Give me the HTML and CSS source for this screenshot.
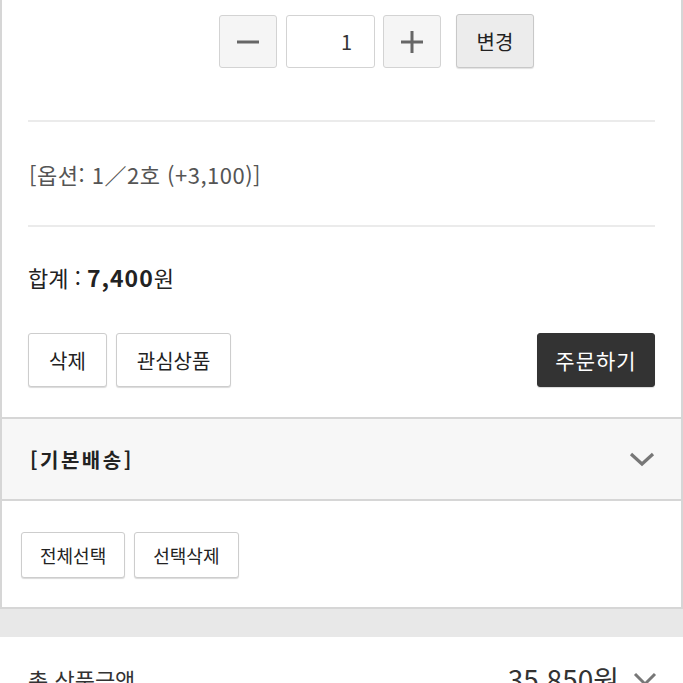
FILE: index.html
```html
<!DOCTYPE html>
<html lang="ko">
<head>
    <meta charset="UTF-8">
    <title>장바구니</title>
    <link rel="stylesheet" href="styles.css">
</head>
<body>
    <div class="cart-item">
        <div class="qty">
            <button class="qty-btn">
                <svg width="24" height="24" viewBox="0 0 24 24"><path d="M1 12h22" stroke="#666" stroke-width="3"/></svg>
            </button>
            <div class="qty-input">1</div>
            <button class="qty-btn">
                <svg width="24" height="24" viewBox="0 0 24 24"><path d="M1 12h22M12 1v22" stroke="#666" stroke-width="3"/></svg>
            </button>
            <button class="change-btn">변경</button>
        </div>
        <div class="option">[옵션: 1／2호 (+3,100)]</div>
        <div class="total">합계 : <b>7,400</b>원</div>
        <div class="actions">
            <button class="btn">삭제</button>
            <button class="btn">관심상품</button>
            <button class="btn btn-dark">주문하기</button>
        </div>
    </div>

    <div class="delivery">
        <span>[기본배송]</span>
        <svg width="26" height="16" viewBox="0 0 26 16"><path d="M2 3l11 10L24 3" fill="none" stroke="#777" stroke-width="3.2"/></svg>
    </div>

    <div class="select">
        <button class="btn btn-small">전체선택</button>
        <button class="btn btn-small">선택삭제</button>
    </div>

    <div class="gap"></div>

    <div class="summary">
        <span class="summary-label">총 상품금액</span>
        <span class="summary-price">35,850원</span>
        <svg width="24" height="16" viewBox="0 0 24 16"><path d="M2 3l10 10L22 3" fill="none" stroke="#777" stroke-width="3"/></svg>
    </div>
</body>
</html>
```

FILE: styles.css
```css
*{
    margin: 0;
    padding: 0;
    box-sizing: border-box;
}
body{
    width: 683px;
    background: #fff;
    font-family: "Noto Sans CJK KR", "Noto Sans", sans-serif;
    color: #222;
}
button{
    font-family: inherit;
    cursor: pointer;
}
.cart-item{
    border: 2px solid #d6d6d6;
    border-top: 0;
    padding: 0 26px;
    height: 419px;
}
.qty{
    display: flex;
    padding: 14px 0 0 191px;
    height: 68px;
}
.qty-btn{
    width: 58px;
    height: 53px;
    border: 1px solid #d3d3d3;
    border-radius: 3px;
    background: #f5f5f5;
    display: flex;
    align-items: center;
    justify-content: center;
    margin-top: 1px;
}
.qty-input{
    width: 89px;
    height: 53px;
    margin: 1px 8px 0 9px;
    border: 1px solid #d3d3d3;
    border-radius: 3px;
    background: #fff;
    font-size: 20px;
    line-height: 51px;
    text-align: right;
    padding-right: 22px;
    color: #333;
}
.change-btn{
    width: 78px;
    height: 54px;
    margin-left: 15px;
    border: 1px solid #c8c8c8;
    border-radius: 3px;
    background: #ececec;
    font-size: 20px;
    color: #222;
    box-shadow: 0 1px 1px rgba(0,0,0,.12);
}
.option{
    margin-top: 52px;
    border-top: 2px solid #ebebeb;
    border-bottom: 2px solid #ebebeb;
    height: 107px;
    display: flex;
    align-items: center;
    font-size: 22px;
    letter-spacing: .5px;
    color: #555;
    padding-left: 1px;
}
.total{
    height: 106px;
    padding-bottom: 7px;
    display: flex;
    align-items: center;
    font-size: 22px;
    color: #222;
    white-space: pre;
}
.total b{
    font-size: 23px;
    letter-spacing: 1px;
}
.actions{
    display: flex;
    gap: 9px;
}
.btn{
    height: 54px;
    padding: 0 20px;
    border: 1px solid #cdcdcd;
    border-radius: 3px;
    background: #fff;
    font-size: 20px;
    color: #222;
    box-shadow: 0 1px 1px rgba(0,0,0,.15);
}
.btn-dark{
    margin-left: auto;
    width: 118px;
    padding: 0;
    background: #333;
    border-color: #333;
    color: #fff;
    font-size: 21px;
    letter-spacing: 1px;
}
.delivery{
    height: 82px;
    background: #f7f7f7;
    border: 2px solid #d6d6d6;
    border-top: 0;
    display: flex;
    align-items: center;
    justify-content: space-between;
    padding: 0 26px 0 28px;
    font-size: 20px;
    font-weight: bold;
    letter-spacing: 2.5px;
    color: #222;
}
.select{
    height: 108px;
    border: 2px solid #d6d6d6;
    border-top: 0;
    display: flex;
    align-items: flex-start;
    gap: 9px;
    padding: 31px 0 0 19px;
}
.btn-small{
    height: 46px;
    padding: 0 18px;
    font-size: 18px;
}
.gap{
    height: 28px;
    background: #e8e8e8;
}
.summary{
    display: flex;
    align-items: center;
    padding: 22px 26px 0 28px;
    font-size: 22px;
    color: #333;
}
.summary-label{
    flex: 1;
}
.summary-price{
    font-size: 28px;
    margin-right: 14px;
}
```
